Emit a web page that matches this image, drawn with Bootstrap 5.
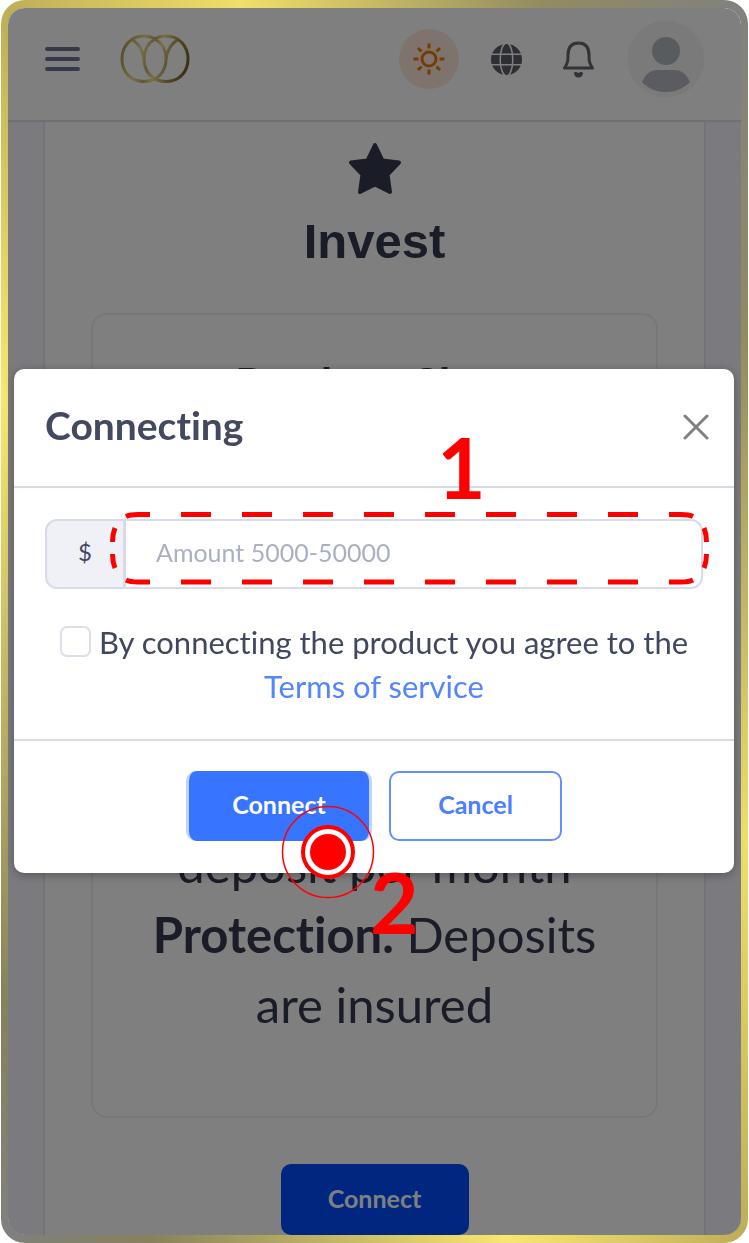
<!DOCTYPE html>
<html lang="en">
<head>
<meta charset="utf-8">
<meta name="viewport" content="width=device-width, initial-scale=1">
<title>Invest</title>
<link href="https://cdn.jsdelivr.net/npm/bootstrap@5.3.0/dist/css/bootstrap.min.css" rel="stylesheet">
<style>
  body { font-family: "Lato", "Open Sans", sans-serif; font-variant-ligatures: none; color: #40475e; background: #fff; }
  .app-shell {
    position: relative; overflow: hidden; isolation: isolate; min-height: 100vh; margin: 0 1px;
    border: 7px solid transparent; border-top-width: 8px; border-bottom-width: 8px; border-radius: 24px;
    background:
      linear-gradient(#7b7b80, #7b7b80) padding-box,
      linear-gradient(to top right, #808080 0%, #86815c 10%, #f9e86c 34%, #bdae58 50%, #f0df68 66%, #928c60 86%, #808080 100%) border-box;
  }
  .page { position: relative; background: #f6f6fe; overflow: hidden; border-radius: 17px; }
  .page::after { content: ""; position: absolute; inset: 0; background: rgba(0,0,0,.5); }
  .topbar { height: 114px; background: #fff; border-bottom: 2px solid #dedfea; padding: 0 36px 10px 37px; }
  .icon-btn { border: 0; background: none; padding: 0; display: flex; }
  .sun-btn { width: 60px; height: 60px; border-radius: 50%; background: #fde9db; align-items: center; justify-content: center; }
  .product-panel { margin: 0 35px; padding: 20px 46px 0; background: #fff; border: solid #e8e8f0; border-width: 0 2px; color: #343950; }
  .panel-title { font: bold 49px/58px "Liberation Sans", Arial, sans-serif; margin: 16px 0 43px; }
  .plan-box { min-height: 805px; padding: 34px 24px 77px; border: 2px solid #eee; border-radius: 16px; }
  .plan-name { font-size: 46px; line-height: 70px; font-weight: 700; margin: 0; }
  .plan-text { font-size: 49px; line-height: 70px; margin: 0; }
  .btn-main { height: 70px; font-size: 25px; font-weight: 700; border-radius: 10px; color: #fff; padding-top: 4px; }
  .btn-page { width: 188px; height: 71px; margin-top: 46px; background: #004cff; }
  .modal { padding-bottom: 2px; }
  .modal-dialog { max-width: none; margin: 0 15px 0 14px; min-height: 100%; }
  .modal-content { border: 0; border-radius: 10px; color: inherit; box-shadow: 0 2px 10px rgba(0,0,0,.3); }
  .modal-header { height: 119px; padding: 0 25px 0 31px; border-bottom: 2px solid #d8dbe6; }
  .modal-title { font-size: 39px; line-height: 50px; font-weight: 700; color: #434a60; padding-bottom: 5px; }
  .modal-body { padding: 31px; }
  .modal-footer { padding: 30px 30px 32px; gap: 17px; border-top: 2px solid #d8dbe6; }
  .modal-footer > * { margin: 0; }
  .amount .input-group-text { width: 80px; font-size: 24px; padding-bottom: 10px; color: #434a60; background: #f0f1f6; border: 2px solid #d8dbe6; border-radius: 12px; justify-content: center; }
  .amount .form-control { height: 70px; font-size: 25px; padding: 0 30px 4px; border: 2px solid #d8dbe6; border-radius: 12px; }
  .amount .form-control::placeholder { color: #aab0c4; }
  .agree { margin-top: 31px; font-size: 31px; line-height: 44px; }
  .agree .form-check-input { float: none; width: 31px; height: 31px; margin: 0; border: 2px solid #dcdfeb; border-radius: 7px; }
  .agree a { color: #5484ff; text-decoration: none; }
  .btn-go { width: 186px; background: #3774ff; border: solid #c0d2ff; border-width: 0 3px; }
  .btn-stop { width: 173px; color: #4c7eff; background: #fff; border: 2px solid #6390ff; }
  .field-mark { position: absolute; left: 65px; right: -6px; top: -7px; z-index: 6; pointer-events: none; }
  .step-no { position: absolute; z-index: 7; color: red; font: bold 84px/60px "Lato", sans-serif; pointer-events: none; }
  .step-one { left: 392px; top: -82px; }
  .step-two { left: 184px; top: 101px; }
  .tap-mark { position: absolute; left: 95px; top: 34px; z-index: 6; pointer-events: none; }
</style>
</head>
<body>
<div class="app-shell">
  <div class="page">
  <header class="topbar d-flex align-items-center justify-content-between">
    <div class="d-flex align-items-center">
      <button class="icon-btn" aria-label="Menu">
        <svg width="35" height="26" viewBox="0 0 35 26" stroke="#6b7394" stroke-width="4" stroke-linecap="round"><path d="M2 3H33M2 13H33M2 23H33"/></svg>
      </button>
      <a href="#" aria-label="Home" class="d-flex ms-4 ps-3">
        <svg width="70" height="50" viewBox="0 0 70 50" fill="none" stroke="url(#gold)" stroke-width="3">
          <defs><linearGradient id="gold" gradientUnits="userSpaceOnUse" x1="0" y1="10" x2="70" y2="30"><stop offset="0" stop-color="#a8924c"/><stop offset=".3" stop-color="#efdc92"/><stop offset=".45" stop-color="#c4ae62"/><stop offset=".55" stop-color="#efdc92"/><stop offset=".75" stop-color="#ac964c"/><stop offset="1" stop-color="#6e5a20"/></linearGradient></defs>
          <path d="M35 5C31 2.500 27 2 24 2C11 2 2 12 2 25C2 38 11 47.500 24 47.500C37 47.500 46 38 46 25C46 16 42 9 35 5C28 9 24 16 24 25C24 38 33 47.500 46 47.500C59 47.500 68 38 68 25C68 12 59 2 46 2C42 2 38 3 35 5"/><path d="M13 6C20 11 23 17 24 25M57 6C50 11 47 17 46 25"/>
        </svg>
      </a>
    </div>
    <div class="d-flex align-items-center">
      <button class="icon-btn sun-btn" aria-label="Theme">
        <svg width="32" height="32" viewBox="0 0 32 32" fill="none" stroke="#e87a10" stroke-width="3"><circle cx="16" cy="16" r="7"/><path d="M16 .5V5.500M16 26.500V31.500M.5 16H5.500M26.500 16H31.500M5 5L8.500 8.500M23.500 23.500L27 27M27 5L23.500 8.500M5 27L8.500 23.500"/></svg>
      </button>
      <button class="icon-btn ms-4" aria-label="Language">
        <svg class="ms-2" width="31" height="31" viewBox="0 0 32 32"><circle cx="16" cy="16" r="16" fill="#5c5d6a"/><g fill="none" stroke="#fff" stroke-width="1.600"><ellipse cx="16" cy="16" rx="6.500" ry="17"/><path d="M0 10.500H32M0 21.500H32"/></g></svg>
      </button>
      <button class="icon-btn ms-4" aria-label="Notifications">
        <svg class="ms-3" width="33" height="37" viewBox="0 0 33 37" fill="none" stroke="#66676f" stroke-width="3" stroke-linejoin="round"><path d="M2.500 27C6 22 6 19 6 14C6 6 10 2 16.500 2C23 2 27 6 27 14C27 19 27 22 30.500 27Z"/><path d="M12 32C12.500 30.500 15 31 16.500 32C18 31 20.500 30.500 21 32C21 38 12 38 12 32Z" fill="#66676f" stroke="none"/></svg>
      </button>
      <a href="#" class="d-flex ms-4" aria-label="Profile">
        <svg class="ms-2" width="78" height="78" viewBox="0 0 78 78"><circle cx="39" cy="39" r="38.500" fill="#f4f4f7"/><circle cx="39" cy="31" r="14" fill="#b0b8be"/><path d="M15 62C19 53 24 50 31 50H47C54 50 59 53 63 62C56 69 48 72 39 72C30 72 22 69 15 62Z" fill="#b6b8c2"/></svg>
      </a>
    </div>
  </header>

  <main class="product-panel text-center">
    <svg class="d-block mx-auto" width="54" height="54" viewBox="0 0 54 54"><path d="M27 3L34.500 18.500L51 20.500L39.500 32.500L42 50L27 42.500L12 50L14.500 32.500L3 20.500L19.500 18.500Z" fill="#343950" stroke="#343950" stroke-width="4" stroke-linejoin="round"/></svg>
    <h1 class="panel-title">Invest</h1>
    <section class="plan-box d-flex flex-column justify-content-between">
      <h2 class="plan-name">Product Class</h2>
      <p class="plan-text">deposit per month<br><strong>Protection.</strong> Deposits<br>are insured</p>
    </section>
    <button class="btn btn-main btn-page">Connect</button>
  </main>
  </div>
</div>

<div class="modal d-block" tabindex="-1" role="dialog" aria-labelledby="dialogTitle">
  <div class="modal-dialog modal-dialog-centered">
    <div class="modal-content">
      <div class="modal-header d-flex justify-content-between">
        <h2 class="modal-title" id="dialogTitle">Connecting</h2>
        <button class="icon-btn" aria-label="Close">
          <svg width="26" height="26" viewBox="0 0 26 26" stroke="#808080" stroke-width="3" stroke-linecap="round"><path d="M2 2L24 24M24 2L2 24"/></svg>
        </button>
      </div>
      <div class="modal-body">
        <div class="position-relative">
          <div class="input-group amount">
            <label class="input-group-text" for="amount">$</label>
            <input class="form-control" id="amount" type="text" placeholder="Amount 5000-50000">
          </div>
          <svg class="field-mark" viewBox="0 0 599 73" fill="none" stroke="red" stroke-width="5">
            <path d="M16 4.500C20 2.500 24 2.500 28 2.500H40M559 2.500H571C575 2.500 579 2.500 583 4.500M16 68C20 70 24 70 28 70H40M559 70H571C575 70 579 70 583 68"/>
            <path d="M71 2.500H528M71 70H528" stroke-dasharray="30 31"/>
            <path d="M5 16Q2.500 22 2.500 30M2.500 42Q2.500 50 5 56M594 16Q596.500 22 596.500 30M596.500 42Q596.500 50 594 56"/>
          </svg>
          <span class="step-no step-one">1</span>
        </div>
        <div class="agree text-center">
          <div class="d-flex align-items-center justify-content-center gap-2">
            <input class="form-check-input" type="checkbox" id="agree">
            <label for="agree">By connecting the product you agree to the</label>
          </div>
          <a href="#">Terms of service</a>
        </div>
      </div>
      <div class="modal-footer justify-content-center">
        <div class="position-relative">
          <button class="btn btn-main btn-go">Connect</button>
          <svg class="tap-mark" width="94" height="94" viewBox="0 0 94 94" fill="none" stroke="red"><circle cx="47" cy="47" r="45.500" stroke-width="1.500"/><circle cx="47" cy="47" r="25" fill="#fff" stroke-width="4"/><circle cx="47" cy="47" r="18" fill="red" stroke="none"/></svg>
          <span class="step-no step-two">2</span>
        </div>
        <button class="btn btn-main btn-stop">Cancel</button>
      </div>
    </div>
  </div>
</div>
<script src="https://cdn.jsdelivr.net/npm/bootstrap@5.3.0/dist/js/bootstrap.bundle.min.js"></script>
</body>
</html>
